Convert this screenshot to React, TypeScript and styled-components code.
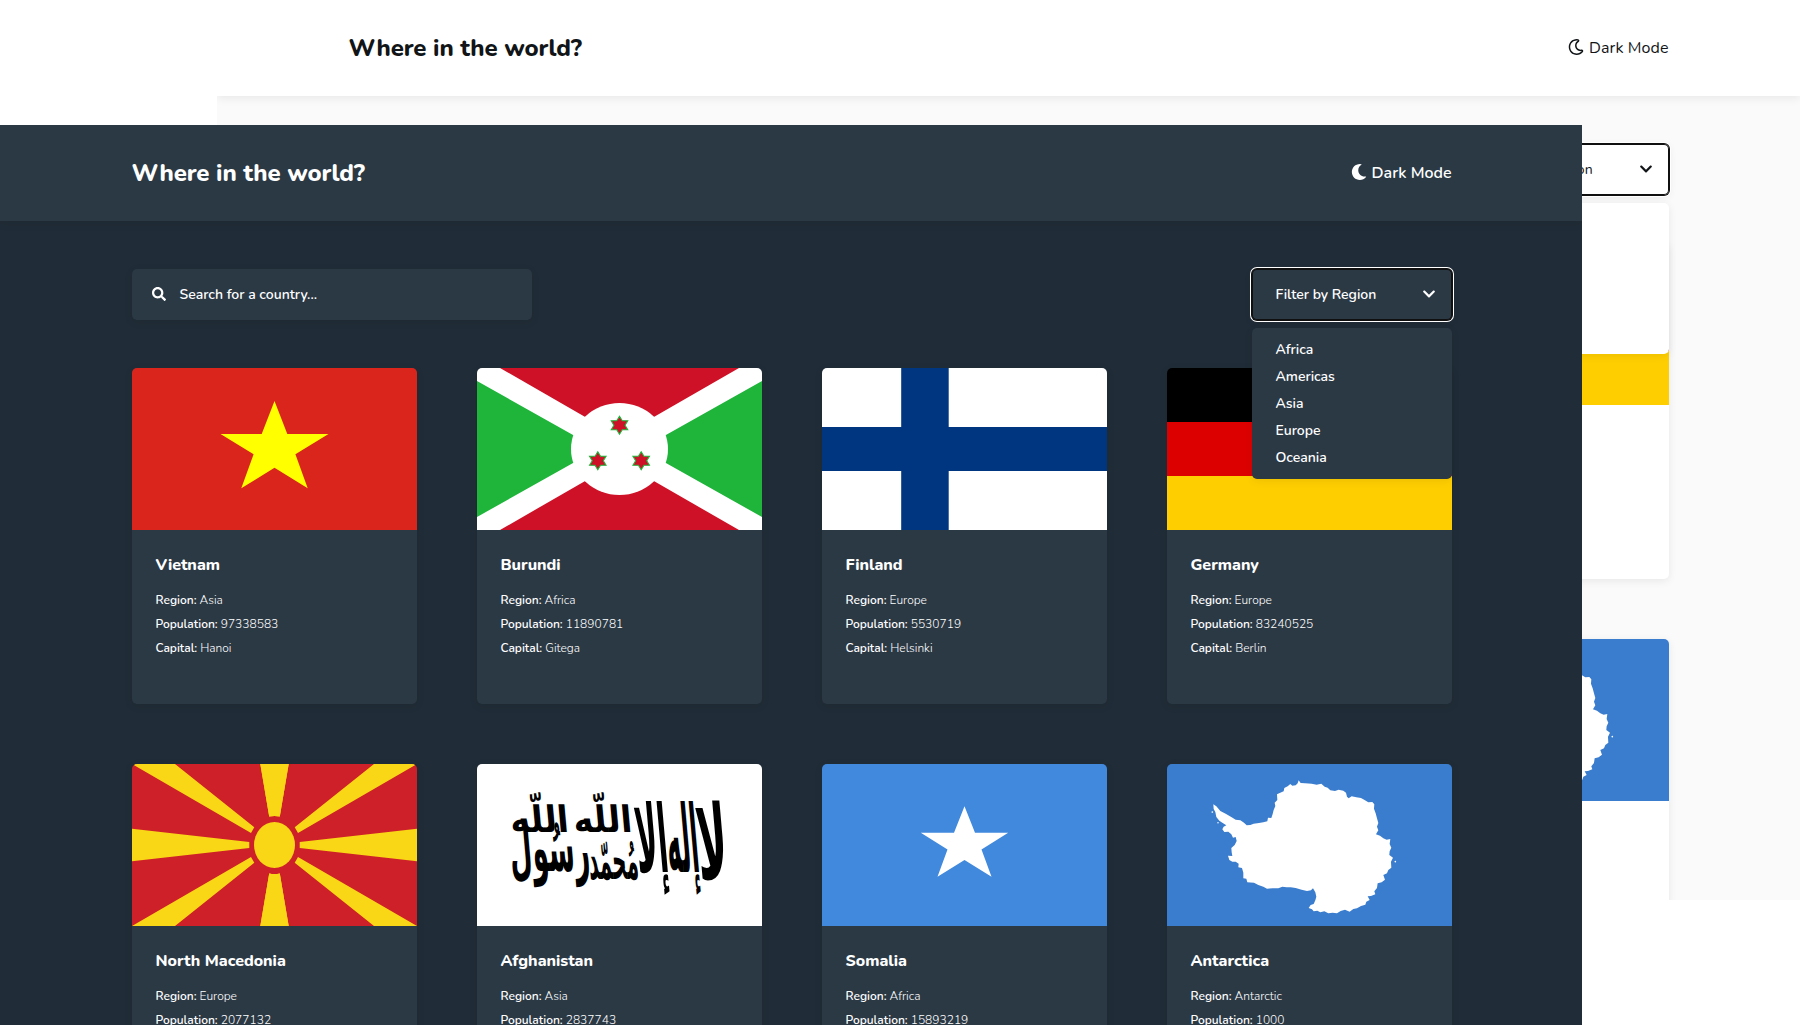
import React from "react";
import styled, { createGlobalStyle, ThemeProvider } from "styled-components";
import { FaChevronDown, FaMoon, FaRegMoon, FaSearch } from "react-icons/fa";

type Mode = {
  page: string;
  element: string;
  text: string;
  title: number;
  label: number;
  tracking: string;
  shadow: string;
};

const dark: Mode = {
  page: "#202c37",
  element: "#2b3945",
  text: "#ffffff",
  title: 800,
  label: 600,
  tracking: "0",
  shadow: "0 2px 9px rgba(0, 0, 0, 0.08)",
};

const light: Mode = {
  page: "#fafafa",
  element: "#ffffff",
  text: "#111517",
  title: 800,
  label: 400,
  tracking: "0.09px",
  shadow: "0 2px 9px rgba(0, 0, 0, 0.08)",
};

const GlobalStyle = createGlobalStyle`
  *, *::before, *::after { box-sizing: border-box; }
  body {
    margin: 0;
    background: #fff;
    font-family: "Nunito", "Open Sans", sans-serif;
  }
`;

const Stage = styled.main`
  display: grid;
  grid-template: 1025px / 1800px;
  width: 1800px;
  height: 1025px;
  overflow: hidden;
`;

const Window = styled.section<{ $x: number; $y: number; $w: number; $h: number }>`
  grid-area: 1 / 1;
  margin: ${(p) => p.$y}px 0 0 ${(p) => p.$x}px;
  width: ${(p) => p.$w}px;
  height: ${(p) => p.$h}px;
  overflow: hidden;
  isolation: isolate;
  background: ${(p) => (p.theme as Mode).page};
  color: ${(p) => (p.theme as Mode).text};
`;

const Header = styled.header`
  display: flex;
  align-items: center;
  justify-content: space-between;
  width: 1583px;
  height: 96px;
  padding: 0 131.5px;
  background: ${(p) => (p.theme as Mode).element};
  box-shadow: ${(p) => (p.theme as Mode).shadow};
`;

const Title = styled.h1`
  margin: 0;
  font-size: 24px;
  font-weight: ${(p) => (p.theme as Mode).title};
  letter-spacing: -0.07px;
`;

const ModeSwitch = styled.button`
  display: flex;
  align-items: center;
  gap: 5px;
  padding: 0;
  border: 0;
  background: none;
  color: inherit;
  font: ${(p) => (p.theme as Mode).label} 16px "Nunito", sans-serif;
  letter-spacing: ${(p) => (p.theme as Mode).tracking};

  svg {
    margin-top: -2px;
  }
`;

const Content = styled.div`
  width: 1320px;
  margin: 48px 0 0 132px;
`;

const Toolbar = styled.div<{ $end?: boolean }>`
  display: flex;
  justify-content: ${(p) => (p.$end ? "flex-end" : "space-between")};
  margin-bottom: 48px;
`;

const Search = styled.label`
  display: flex;
  align-items: center;
  gap: 13.5px;
  width: 400px;
  height: 51px;
  padding-left: 20px;
  border-radius: 5px;
  background: ${(p) => (p.theme as Mode).element};
  box-shadow: ${(p) => (p.theme as Mode).shadow};
  font-size: 14px;
  font-weight: ${(p) => (p.theme as Mode).label};

  svg {
    margin-top: -2px;
  }
`;

const Filter = styled.div`
  position: relative;
  width: 200px;
`;

const FilterButton = styled.button`
  display: flex;
  align-items: center;
  justify-content: space-between;
  width: 200px;
  height: 51px;
  padding: 0 16px 0 23.5px;
  border: 0;
  border-radius: 5px;
  background: ${(p) => (p.theme as Mode).element};
  color: inherit;
  box-shadow: inset 0 0 0 1px #101010, 0 0 0 1px #101010, 0 0 0 2px #fff,
    ${(p) => (p.theme as Mode).shadow};
  font: ${(p) => (p.theme as Mode).label} 14px "Nunito", sans-serif;
  letter-spacing: ${(p) => (p.theme as Mode).tracking};

  svg {
    margin-top: -2px;
  }
`;

const Menu = styled.ul`
  position: absolute;
  z-index: 2;
  top: 59px;
  left: 0;
  width: 200px;
  height: 151px;
  margin: 0;
  padding: 8px 23.5px;
  border-radius: 5px;
  background: ${(p) => (p.theme as Mode).element};
  box-shadow: ${(p) => (p.theme as Mode).shadow};
  list-style: none;
  font-size: 14px;
  font-weight: 600;
  line-height: 27px;
`;

const Grid = styled.div<{ $columns: number }>`
  display: grid;
  grid-template-columns: repeat(${(p) => p.$columns}, 285px);
  grid-auto-rows: 336px;
  justify-content: end;
  gap: 60px;
`;

const Card = styled.article`
  overflow: hidden;
  border-radius: 5px;
  background: ${(p) => (p.theme as Mode).element};
  box-shadow: ${(p) => (p.theme as Mode).shadow};
`;

const FlagArt = styled.svg`
  display: block;
  width: 285px;
  height: 162px;
`;

const CardBody = styled.div`
  padding: 24px 23.5px;
`;

const Name = styled.h2`
  margin: 0 0 12px;
  font-size: 16px;
  font-weight: 800;
  line-height: 22px;
`;

const Fact = styled.p`
  margin: 0;
  font-size: 12px;
  font-weight: 300;
  line-height: 24px;

  b {
    font-weight: 600;
  }
`;

const Flag = ({ children }: { children: React.ReactNode }) => (
  <FlagArt viewBox="0 0 285 162" preserveAspectRatio="none">
    {children}
  </FlagArt>
);

const Vietnam = () => (
  <Flag>
    <rect width="285" height="162" fill="#da251d" />
    <polygon
      fill="#ff0"
      points="142.5,33 155.3,66 196.5,66 163.4,86.3 175.7,120.3 142.5,99.7 109.3,120.3 121.6,86.3 88.5,66 129.7,66"
    />
  </Flag>
);

const hexagram = Array.from({ length: 12 }, (_, i) => {
  const r = i % 2 ? 5.2 : 9;
  const a = (i * Math.PI) / 6;
  return `${(r * Math.sin(a) * 1.06).toFixed(2)},${(-r * Math.cos(a)).toFixed(2)}`;
}).join(" ");

const Burundi = () => (
  <Flag>
    <rect width="285" height="162" fill="#fff" />
    <path d="M23 0H262L142.5 68.7ZM23 162H262L142.5 93.3Z" fill="#ce1126" />
    <path d="M0 13L121 81L0 149ZM285 13L164 81L285 149Z" fill="#1eb53a" />
    <ellipse cx="142.5" cy="81" rx="48.5" ry="46" fill="#fff" />
    {[[142.5, 57.2], [120.8, 92.8], [164.2, 92.8]].map(([x, y]) => (
      <polygon
        key={x}
        points={hexagram}
        transform={`translate(${x} ${y})`}
        fill="#ce1126"
        stroke="#1eb53a"
        strokeWidth="1.1"
      />
    ))}
  </Flag>
);

const Finland = () => (
  <Flag>
    <rect width="285" height="162" fill="#fff" />
    <path d="M79.2 0H126.7V58.9H285V103.1H126.7V162H79.2V103.1H0V58.9H79.2Z" fill="#003580" />
  </Flag>
);

const Germany = () => (
  <Flag>
    <rect width="285" height="54" fill="#000" />
    <rect y="54" width="285" height="54" fill="#d00" />
    <rect y="108" width="285" height="54" fill="#ffce00" />
  </Flag>
);

const rays = "M0 0H43L122.3 63.3L119 69ZM128.3 0H156.7L147.8 52.5Q142.5 51.5 137.2 52.5Z";

const Macedonia = () => (
  <Flag>
    <rect width="285" height="162" fill="#ce2028" />
    <g fill="#f9d616">
      <path d={rays} />
      <path d={rays} transform="matrix(-1 0 0 1 285 0)" />
      <path d={rays} transform="matrix(1 0 0 -1 0 162)" />
      <path d={rays} transform="rotate(180 142.5 81)" />
      <path d="M0 64.8V97.2L117.3 84V78ZM285 64.8V97.2L167.7 84V78Z" />
      <ellipse cx="142.5" cy="81" rx="20.5" ry="23" />
    </g>
  </Flag>
);

const Script = styled.text`
  font-family: "DejaVu Sans", sans-serif;
  font-size: 100px;
  font-weight: 700;
  direction: rtl;
  text-anchor: start;
`;

/* words, right edge, baseline, width, vertical stretch */
const phrases: [string, number, number, number, number][] = [
  ["لا", 676, 266, 92, 3.1],
  ["إله", 588, 246, 96, 2.8],
  ["إلا", 496, 246, 96, 2.8],
  ["اللّه", 384, 126, 176, 1.1],
  ["اللّه", 194, 126, 176, 1.1],
  ["مُحمّد", 404, 266, 150, 1.6],
  ["رسُول", 258, 244, 240, 2],
];

const Afghanistan = () => (
  <Flag>
    <rect width="285" height="162" fill="#fff" />
    <g transform="translate(28 26) scale(0.3333)">
      {phrases.map(([words, x, y, width, tall]) => (
        <Script
          key={x}
          transform={`translate(${x} ${y}) skewX(5) scale(1 ${tall})`}
          textLength={width}
          lengthAdjust="spacingAndGlyphs"
        >
          {words}
        </Script>
      ))}
    </g>
  </Flag>
);

const Somalia = () => (
  <Flag>
    <rect width="285" height="162" fill="#4189dd" />
    <polygon
      fill="#fff"
      points="142.5,42.3 153,68.8 186.2,68.8 159.5,85.5 169.5,112.8 142.5,96 115.5,112.8 125.5,85.5 98.8,68.8 132,68.8"
    />
  </Flag>
);

const Antarctica = () => (
  <Flag>
    <rect width="285" height="162" fill="#3a7dce" />
    <g transform="translate(28 6) scale(0.3333)" fill="#fff">
      <path d="M55 103L64 109L76 123L92 131L110 142L122 149L136 151L147 158L155 166L166 165L176 161L192 159L205 157L217 154L219 143L229 144L233 132L236 120L241 108L239 98L247 90L246 73L254 69L266 64L268 54L278 49L286 42L292 47L302 46L308 40L311 31L317 39L330 40L350 41L365 44L379 41L389 50L398 53L406 61L420 63L431 59L445 62L453 68L456 80L461 85L470 79L484 82L498 84L510 91L520 97L532 96L538 103L537 116L542 130L546 145L550 159L546 170L550 181L543 193L555 197L565 205L575 209L586 207L584 222L589 233L584 244L583 255L594 263L588 275L589 293L580 300L576 310L565 315L570 329L560 337L548 340L546 354L538 364L541 373L528 378L518 379L524 390L514 395L511 404L498 408L486 415L475 417L464 425L450 419L437 423L426 430L413 428L400 430L388 424L376 427L367 422L356 424L351 418L341 414L347 405L356 402L361 391L364 380L361 367L354 355L348 361L336 363L320 359L302 354L287 352L275 352L262 350L250 355L232 355L216 356L205 350L190 345L177 338L157 337L154 326L145 325L145 308L141 294L130 292L131 281L122 275L112 275L103 270L99 257L112 258L110 247L109 234L119 225L125 213L122 201L114 203L109 193L100 185L88 186L82 178L86 170L94 166L82 158L73 152L64 141L61 126L56 117Z" />
      <circle cx="52" cy="126" r="2.5" />
      <circle cx="69" cy="158" r="2.2" />
      <circle cx="601" cy="275" r="2.5" />
    </g>
  </Flag>
);

type Country = {
  name: string;
  region: string;
  population: string;
  capital?: string;
  Art: () => React.ReactElement;
};

const countries: Country[] = [
  { name: "Vietnam", region: "Asia", population: "97338583", capital: "Hanoi", Art: Vietnam },
  { name: "Burundi", region: "Africa", population: "11890781", capital: "Gitega", Art: Burundi },
  { name: "Finland", region: "Europe", population: "5530719", capital: "Helsinki", Art: Finland },
  { name: "Germany", region: "Europe", population: "83240525", capital: "Berlin", Art: Germany },
  { name: "North Macedonia", region: "Europe", population: "2077132", Art: Macedonia },
  { name: "Afghanistan", region: "Asia", population: "2837743", Art: Afghanistan },
  { name: "Somalia", region: "Africa", population: "15893219", Art: Somalia },
  { name: "Antarctica", region: "Antarctic", population: "1000", Art: Antarctica },
];

const regions = ["Africa", "Americas", "Asia", "Europe", "Oceania"];

const CountryCard = ({ country }: { country: Country }) => (
  <Card>
    <country.Art />
    <CardBody>
      <Name>{country.name}</Name>
      <Fact><b>Region:</b> {country.region}</Fact>
      <Fact><b>Population:</b> {country.population}</Fact>
      {country.capital && <Fact><b>Capital:</b> {country.capital}</Fact>}
    </CardBody>
  </Card>
);

const RegionFilter = ({ items }: { items: string[] }) => (
  <Filter>
    <FilterButton>
      Filter by Region
      <FaChevronDown size={14} />
    </FilterButton>
    <Menu>
      {items.map((item) => (
        <li key={item}>{item}</li>
      ))}
    </Menu>
  </Filter>
);

export default function App() {
  return (
    <Stage>
      <GlobalStyle />
      <ThemeProvider theme={light}>
        <Window $x={217} $y={0} $w={1583} $h={900}>
          <Header>
            <Title>Where in the world?</Title>
            <ModeSwitch>
              <FaRegMoon size={16} />
              Dark Mode
            </ModeSwitch>
          </Header>
          <Content>
            <Toolbar $end>
              <RegionFilter items={[]} />
            </Toolbar>
            <Grid $columns={1}>
              <Card><Germany /></Card>
              <Card><Antarctica /></Card>
            </Grid>
          </Content>
        </Window>
      </ThemeProvider>
      <ThemeProvider theme={dark}>
        <Window $x={0} $y={125} $w={1582} $h={900}>
          <Header>
            <Title>Where in the world?</Title>
            <ModeSwitch>
              <FaMoon size={16} />
              Dark Mode
            </ModeSwitch>
          </Header>
          <Content>
            <Toolbar>
              <Search>
                <FaSearch size={14} />
                Search for a country...
              </Search>
              <RegionFilter items={regions} />
            </Toolbar>
            <Grid $columns={4}>
              {countries.map((c) => (
                <CountryCard key={c.name} country={c} />
              ))}
            </Grid>
          </Content>
        </Window>
      </ThemeProvider>
    </Stage>
  );
}
